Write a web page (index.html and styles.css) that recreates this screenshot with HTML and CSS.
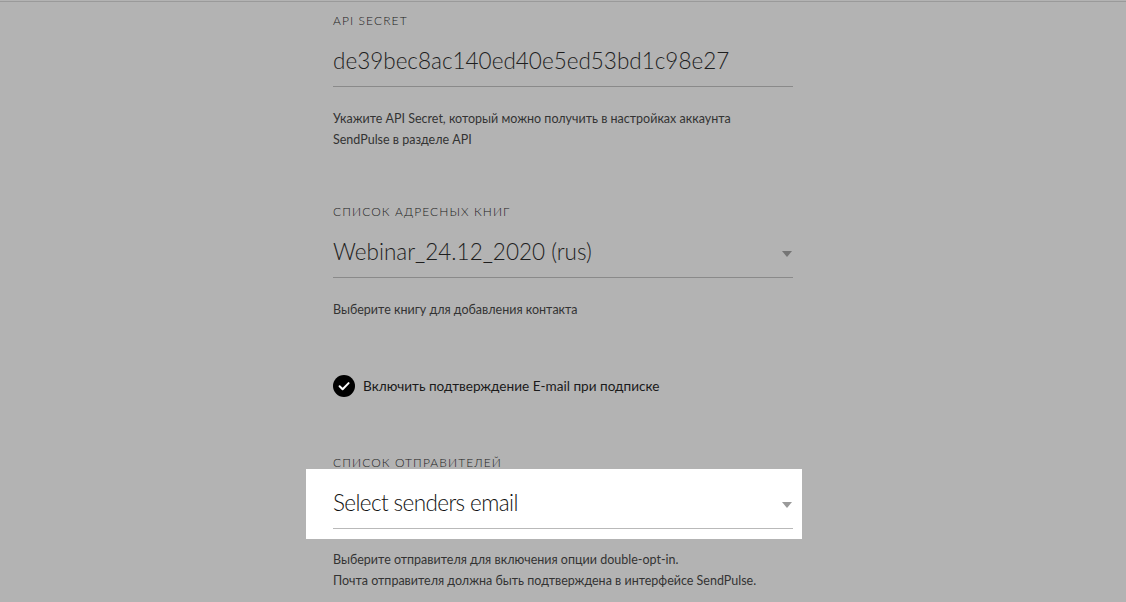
FILE: index.html
```html
<!DOCTYPE html>
<html lang="ru">
<head>
<meta charset="utf-8">
<title>SendPulse</title>
<link rel="stylesheet" href="styles.css">
</head>
<body>
<div class="topline"></div>
<main class="form">
  <section class="field">
    <div class="label">API Secret</div>
    <div class="control">
      <div class="value">de39bec8ac140ed40e5ed53bd1c98e27</div>
    </div>
    <p class="help">Укажите API Secret, который можно получить в настройках аккаунта<br>SendPulse в разделе API</p>
  </section>

  <section class="field field-book">
    <div class="label">Список адресных книг</div>
    <div class="control select">
      <div class="value">Webinar_24.12_2020 (rus)</div>
      <span class="arrow"></span>
    </div>
    <p class="help">Выберите книгу для добавления контакта</p>
  </section>

  <label class="check">
    <span class="check-icon">
      <svg width="22" height="22" viewBox="0 0 22 22"><circle cx="11" cy="11" r="11" fill="#000"/><path d="M6.6 11.3l3 3 6-6.2" fill="none" stroke="#fff" stroke-width="2" stroke-linecap="round" stroke-linejoin="round"/></svg>
    </span>
    <span class="check-text">Включить подтверждение E-mail при подписке</span>
  </label>

  <section class="field field-senders">
    <div class="label">Список отправителей</div>
    <div class="highlight">
      <div class="control select">
        <div class="value value-wide">Select senders email</div>
        <span class="arrow"></span>
      </div>
    </div>
    <p class="help help-tight">Выберите отправителя для включения опции double-opt-in.<br>Почта отправителя должна быть подтверждена в интерфейсе SendPulse.</p>
  </section>
</main>
</body>
</html>
```

FILE: styles.css
```css
html, body {
  margin: 0;
  padding: 0;
}

body {
  background: #b3b3b3;
  font-family: "Lato", "Noto Sans", sans-serif;
  color: #262626;
  padding-top: 1px;
  height: 601px;
  overflow: hidden;
}

.topline {
  border-top: 1px solid #9a9a9a;
}

.form {
  width: 460px;
  margin: 0 auto;
  padding-top: 11px;
}

.label {
  font-size: 12px;
  font-weight: 300;
  line-height: 16px;
  letter-spacing: 1.1px;
  text-transform: uppercase;
  color: #222;
}

.control {
  margin-top: 16px;
  border-bottom: 1px solid #8a8a8a;
  padding-bottom: 9px;
  display: flex;
  align-items: center;
}

.value {
  flex: 1;
  font-size: 22.5px;
  font-weight: 300;
  line-height: 32px;
  color: #1e1e1e;
}

.value-wide {
  letter-spacing: -0.6px;
}

.arrow {
  width: 0;
  height: 0;
  border-left: 5px solid transparent;
  border-right: 5px solid transparent;
  border-top: 6px solid #757575;
  margin-right: 1px;
  margin-top: 4px;
}

.help {
  margin: 21px 0 0;
  font-size: 12.5px;
  line-height: 21px;
  color: #333;
}

.field-book {
  margin-top: 54px;
}

.check {
  display: flex;
  align-items: center;
  gap: 8px;
  margin-top: 55px;
  height: 22px;
}

.check-icon {
  display: flex;
  width: 22px;
  height: 22px;
}

.check-text {
  font-size: 13.6px;
  color: #1a1a1a;
}

.field-senders {
  margin-top: 58px;
}

.highlight {
  position: relative;
  background: #fff;
  margin: -2px -9px 0 -27px;
  padding: 18px 9px 10px 27px;
}

.highlight .control {
  margin-top: 0;
  border-bottom-color: #b9b9b9;
}

.highlight .value {
  color: #111;
}

.highlight .arrow {
  border-top-color: #9a9a9a;
}

.help-tight {
  margin-top: 10px;
}
```
